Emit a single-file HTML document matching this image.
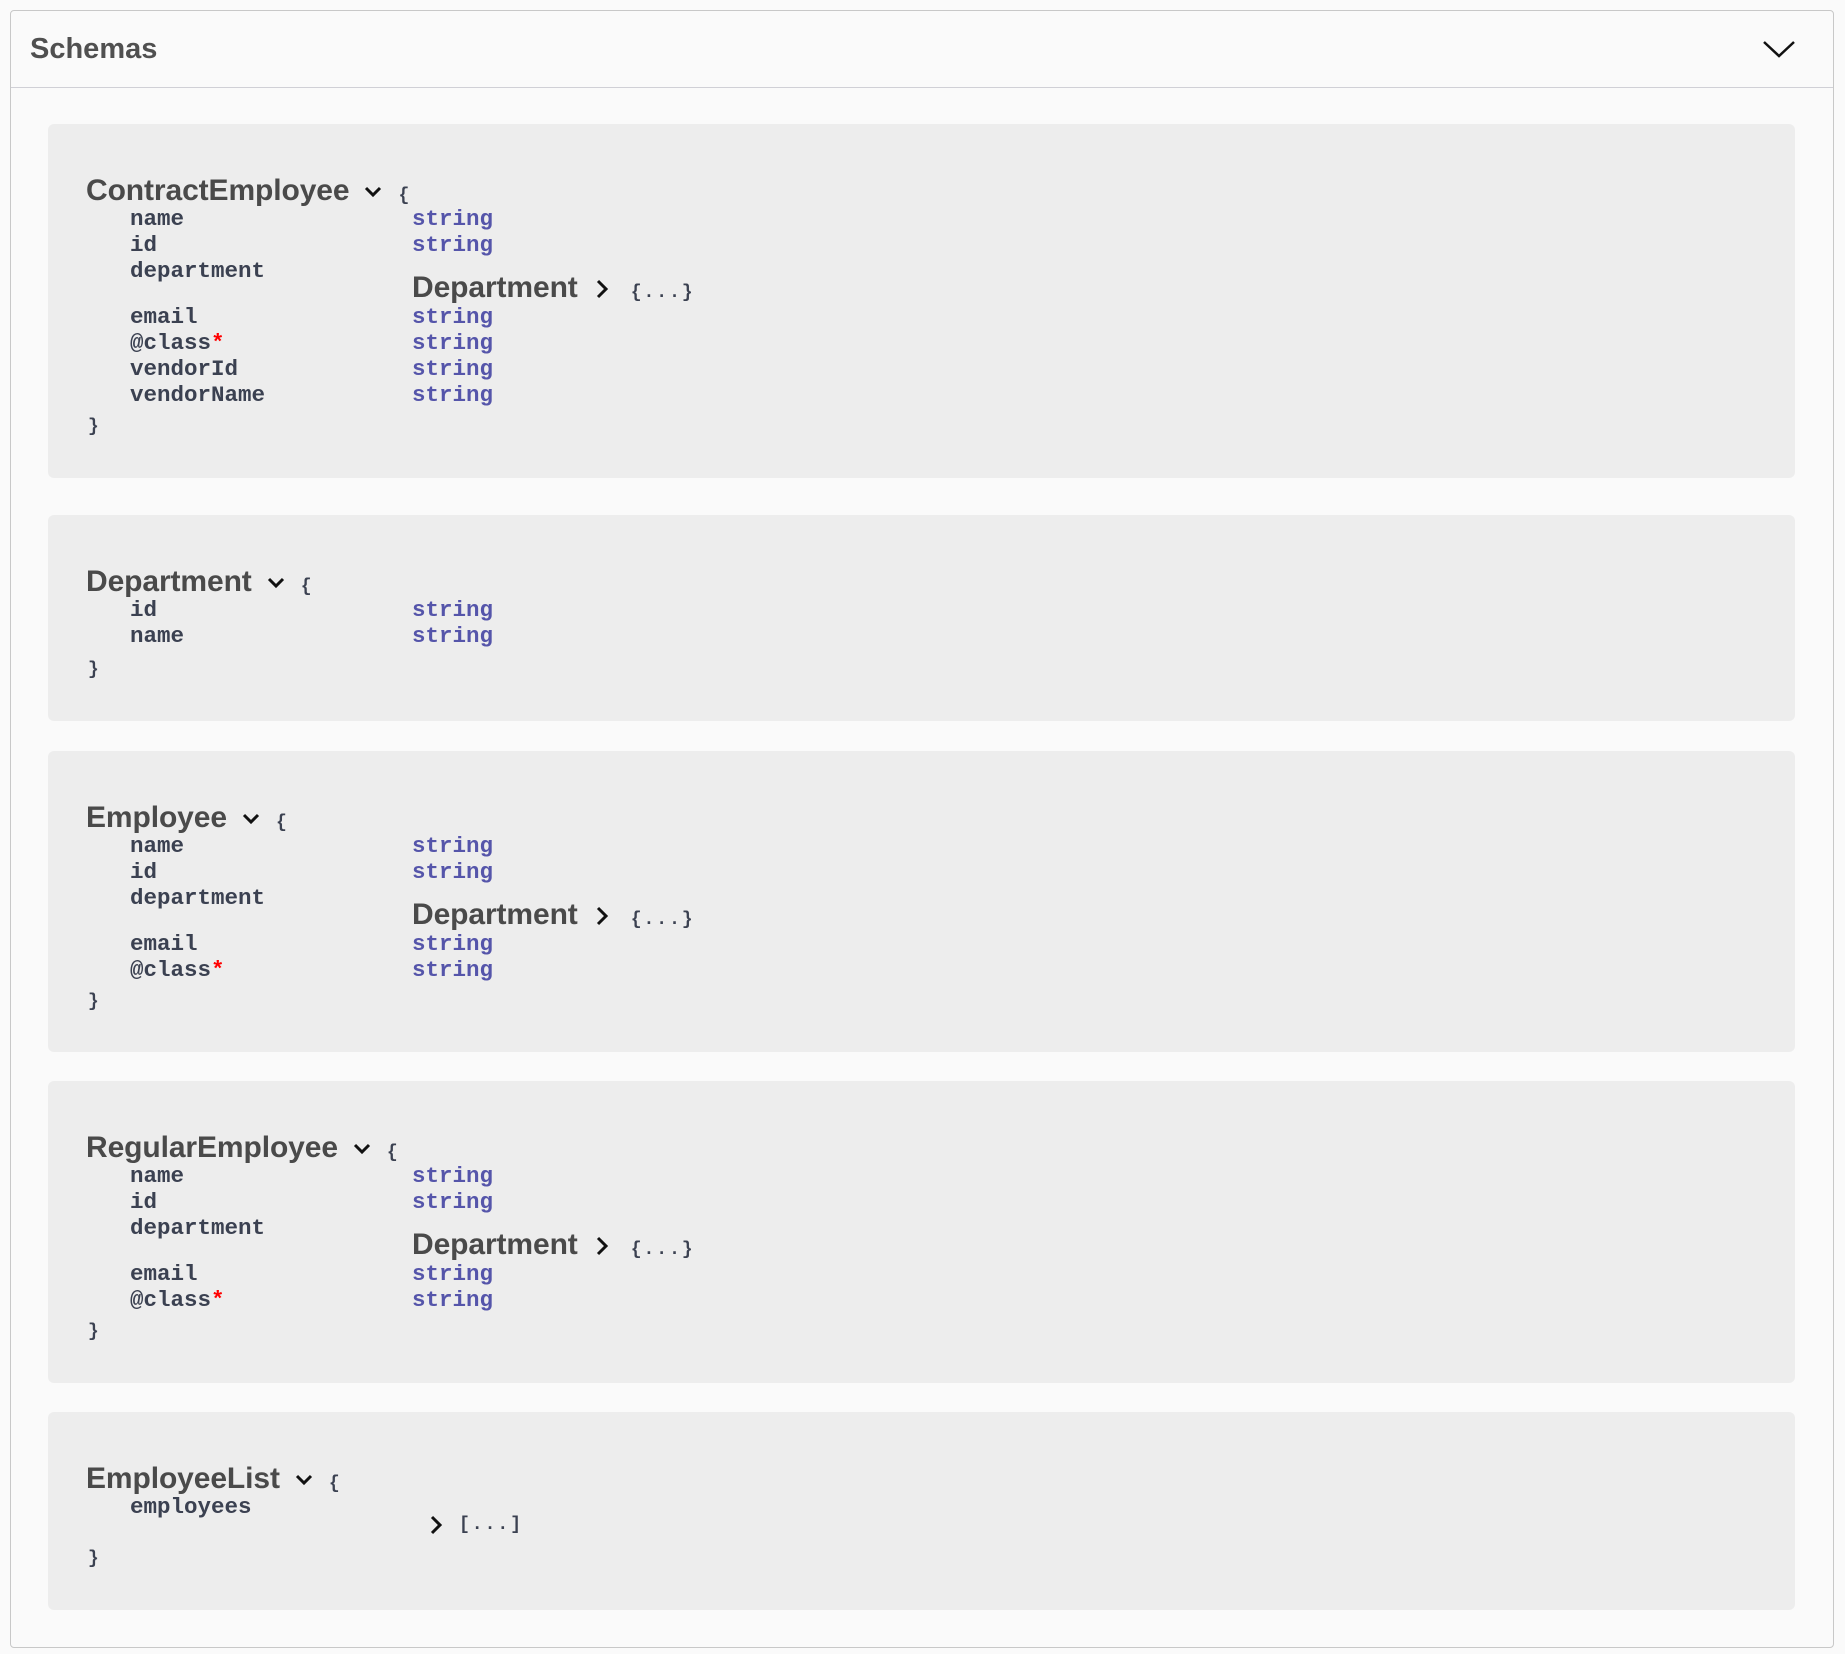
<!DOCTYPE html>
<html><head><meta charset="utf-8"><style>
html,body{margin:0;padding:0;background:#fafafa;width:1845px;height:1654px;overflow:hidden}
.outer{position:absolute;left:10px;top:10px;width:1822px;height:1636px;border:1px solid #c8c8c8;border-radius:4px;background:#fafafa}
.hdr{position:absolute;left:0;top:0;right:0;height:76px;border-bottom:1px solid #d0d0d6}
.hdr span{position:absolute;left:19px;top:22px;font:bold 29px "Liberation Sans",sans-serif;color:#505050}
.card{position:absolute;left:48px;width:1747px;background:#ededed;border-radius:6px}
.l{position:absolute;height:30px;line-height:30px;white-space:nowrap}
.t{font:bold 30px "Liberation Sans",sans-serif;color:#4a4a4a;left:38px;letter-spacing:-0.1px}
.p{font:bold 22.5px "Liberation Mono",monospace;color:#3b4151;left:82px}
.s{font:bold 22.5px "Liberation Mono",monospace;color:#55a;left:364px}
.b{font:bold 18px "Liberation Mono",monospace;color:#3b4151;letter-spacing:2px;margin-left:14px}
.d .b{margin-left:20px}
.r{color:#f00}
svg{vertical-align:middle;margin-left:13px}
</style></head><body>
<div class="outer">
<div class="hdr"><span>Schemas</span>
<svg style="position:absolute;left:1751px;top:28px;margin:0" width="34" height="20" viewBox="0 0 34 20"><path d="M2 3 L17 17 L32 3" fill="none" stroke="#111" stroke-width="2.5"/></svg>
</div>
</div>

<div class="card" style="top:124px;height:354px">
 <div class="l t" style="top:50px">ContractEmployee<svg width="22" height="14" viewBox="0 0 22 14"><path d="M4 3 L11 10 L18 3" fill="none" stroke="#111" stroke-width="3"/></svg><span class="b">{</span></div>
 <div class="l p" style="top:82px">name</div><div class="l s" style="top:82px">string</div>
 <div class="l p" style="top:108px">id</div><div class="l s" style="top:108px">string</div>
 <div class="l p" style="top:134px">department</div>
 <div class="l t d" style="top:147px;left:364px">Department<svg width="20" height="22" viewBox="0 0 20 22"><path d="M7 3 L15 11 L7 19" fill="none" stroke="#111" stroke-width="3"/></svg><span class="b">{...}</span></div>
 <div class="l p" style="top:180px">email</div><div class="l s" style="top:180px">string</div>
 <div class="l p" style="top:206px">@class<span class="r">*</span></div><div class="l s" style="top:206px">string</div>
 <div class="l p" style="top:232px">vendorId</div><div class="l s" style="top:232px">string</div>
 <div class="l p" style="top:258px">vendorName</div><div class="l s" style="top:258px">string</div>
 <div class="l b" style="top:293px;left:40px;margin:0">}</div>
</div>

<div class="card" style="top:515px;height:206px">
 <div class="l t" style="top:50px">Department<svg width="22" height="14" viewBox="0 0 22 14"><path d="M4 3 L11 10 L18 3" fill="none" stroke="#111" stroke-width="3"/></svg><span class="b">{</span></div>
 <div class="l p" style="top:82px">id</div><div class="l s" style="top:82px">string</div>
 <div class="l p" style="top:108px">name</div><div class="l s" style="top:108px">string</div>
 <div class="l b" style="top:145px;left:40px;margin:0">}</div>
</div>

<div class="card" style="top:751px;height:301px">
 <div class="l t" style="top:50px">Employee<svg width="22" height="14" viewBox="0 0 22 14"><path d="M4 3 L11 10 L18 3" fill="none" stroke="#111" stroke-width="3"/></svg><span class="b">{</span></div>
 <div class="l p" style="top:82px">name</div><div class="l s" style="top:82px">string</div>
 <div class="l p" style="top:108px">id</div><div class="l s" style="top:108px">string</div>
 <div class="l p" style="top:134px">department</div>
 <div class="l t d" style="top:147px;left:364px">Department<svg width="20" height="22" viewBox="0 0 20 22"><path d="M7 3 L15 11 L7 19" fill="none" stroke="#111" stroke-width="3"/></svg><span class="b">{...}</span></div>
 <div class="l p" style="top:180px">email</div><div class="l s" style="top:180px">string</div>
 <div class="l p" style="top:206px">@class<span class="r">*</span></div><div class="l s" style="top:206px">string</div>
 <div class="l b" style="top:241px;left:40px;margin:0">}</div>
</div>

<div class="card" style="top:1081px;height:302px">
 <div class="l t" style="top:50px">RegularEmployee<svg width="22" height="14" viewBox="0 0 22 14"><path d="M4 3 L11 10 L18 3" fill="none" stroke="#111" stroke-width="3"/></svg><span class="b">{</span></div>
 <div class="l p" style="top:82px">name</div><div class="l s" style="top:82px">string</div>
 <div class="l p" style="top:108px">id</div><div class="l s" style="top:108px">string</div>
 <div class="l p" style="top:134px">department</div>
 <div class="l t d" style="top:147px;left:364px">Department<svg width="20" height="22" viewBox="0 0 20 22"><path d="M7 3 L15 11 L7 19" fill="none" stroke="#111" stroke-width="3"/></svg><span class="b">{...}</span></div>
 <div class="l p" style="top:180px">email</div><div class="l s" style="top:180px">string</div>
 <div class="l p" style="top:206px">@class<span class="r">*</span></div><div class="l s" style="top:206px">string</div>
 <div class="l b" style="top:241px;left:40px;margin:0">}</div>
</div>

<div class="card" style="top:1412px;height:198px">
 <div class="l t" style="top:50px">EmployeeList<svg width="22" height="14" viewBox="0 0 22 14"><path d="M4 3 L11 10 L18 3" fill="none" stroke="#111" stroke-width="3"/></svg><span class="b">{</span></div>
 <div class="l p" style="top:82px">employees</div>
 <div class="l" style="top:98px;left:364px"><svg width="20" height="22" viewBox="0 0 20 22"><path d="M7 3 L15 11 L7 19" fill="none" stroke="#111" stroke-width="3"/></svg><span class="b">[...]</span></div>
 <div class="l b" style="top:137px;left:40px;margin:0">}</div>
</div>
</body></html>
